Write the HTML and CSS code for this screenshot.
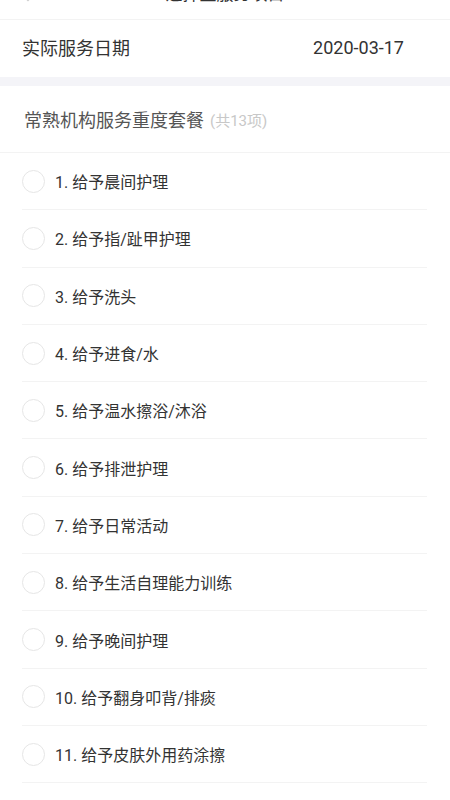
FILE: index.html
```html
<!DOCTYPE html>
<html lang="zh-CN">
<head>
    <meta charset="UTF-8">
    <meta name="viewport" content="width=device-width, initial-scale=1.0">
    <title>选择主服务项目</title>
    <link rel="stylesheet" href="styles.css">
</head>
<body>

<div class="navbar">
    <span class="back"></span>
    <h1 class="nav-title">选择主服务项目</h1>
</div>

<div class="date-row">
    <span>实际服务日期</span>
    <span class="date">2020-03-17</span>
</div>

<div class="gap"></div>

<div class="section-title">
    常熟机构服务重度套餐 <span class="count">(共13项)</span>
</div>

<ul class="items">
    <li class="item"><span class="check"></span>1. 给予晨间护理</li>
    <li class="item"><span class="check"></span>2. 给予指/趾甲护理</li>
    <li class="item"><span class="check"></span>3. 给予洗头</li>
    <li class="item"><span class="check"></span>4. 给予进食/水</li>
    <li class="item"><span class="check"></span>5. 给予温水擦浴/沐浴</li>
    <li class="item"><span class="check"></span>6. 给予排泄护理</li>
    <li class="item"><span class="check"></span>7. 给予日常活动</li>
    <li class="item"><span class="check"></span>8. 给予生活自理能力训练</li>
    <li class="item"><span class="check"></span>9. 给予晚间护理</li>
    <li class="item"><span class="check"></span>10. 给予翻身叩背/排痰</li>
    <li class="item"><span class="check"></span>11. 给予皮肤外用药涂擦</li>
</ul>

</body>
</html>
```

FILE: styles.css
```css
body {
    font-family: Roboto, "Noto Sans CJK SC", sans-serif;
    background-color: #fff;
    margin: 0;
    padding: 0;
    color: #333;
    overflow: hidden;
}

.navbar {
    position: relative;
    height: 47px;
    margin-top: -28px;
    border-bottom: 1px solid #f3f3f3;
    background-color: #fff;
}

.back {
    position: absolute;
    left: 22px;
    top: 15px;
    width: 10px;
    height: 10px;
    border-left: 2px solid #ccc;
    border-bottom: 2px solid #ccc;
    transform: rotate(45deg);
}

.nav-title {
    margin: 0;
    text-align: center;
    font-size: 17px;
    font-weight: normal;
    line-height: 45px;
    color: #333;
}

.date-row {
    box-sizing: border-box;
    display: flex;
    justify-content: space-between;
    align-items: center;
    height: 57px;
    padding: 0 46px 3px 22px;
    font-size: 18px;
    color: #333;
}

.gap {
    height: 9px;
    background-color: #f4f4f8;
}

.section-title {
    display: flex;
    align-items: center;
    gap: 6px;
    height: 66px;
    padding-left: 24px;
    font-size: 18px;
    color: #555;
    border-bottom: 1px solid #f3f3f3;
}

.count {
    font-size: 15px;
    color: #c8c8c8;
}

.items {
    list-style: none;
    margin: 0 23px 0 22px;
    padding: 0;
}

.item {
    box-sizing: border-box;
    display: flex;
    align-items: center;
    gap: 10px;
    height: 57.3px;
    font-size: 16px;
    color: #333;
    border-bottom: 1px solid #f3f3f3;
}

.check {
    box-sizing: border-box;
    width: 23px;
    height: 23px;
    border: 1.5px solid #e6e6e6;
    border-radius: 50%;
}
```
